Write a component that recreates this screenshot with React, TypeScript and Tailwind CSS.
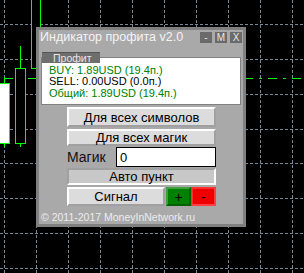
import React from "react";

const VX = [4, 36, 68, 100, 132, 164, 196, 228, 260, 292];
const HY = [24, 59, 94, 129, 163, 198, 233, 268];

function Chart() {
  return (
    <svg className="absolute left-0 top-0" width={304} height={273} viewBox="0 0 304 273">
      {VX.map((x) => (
        <line key={"v" + x} x1={x + 0.5} y1={0} x2={x + 0.5} y2={273} stroke="#778899" strokeWidth={1} strokeDasharray="3 2" />
      ))}
      {HY.map((y) => (
        <line key={"h" + y} x1={0} y1={y + 0.5} x2={304} y2={y + 0.5} stroke="#778899" strokeWidth={1} strokeDasharray="3 2" />
      ))}
      <line x1={0} y1={78.5} x2={304} y2={78.5} stroke="#00ff00" strokeWidth={1} strokeDasharray="9 6 3 6" strokeDashoffset={-4} />
      <line x1={4.5} y1={77} x2={4.5} y2={147} stroke="#00ff00" />
      <rect x={-1.5} y={83.5} width={11} height={60} fill="#ffffff" stroke="#00ff00" />
      <line x1={20.5} y1={46} x2={20.5} y2={147} stroke="#00ff00" />
      <rect x={15.5} y={68.5} width={10} height={75} fill="#000000" stroke="#00ff00" />
      <rect x={31.5} y={-5} width={9} height={73.5} fill="#000000" stroke="#00ff00" />
    </svg>
  );
}

function Btn({ children, className }: { children: React.ReactNode; className: string }) {
  return (
    <div
      className={
        "flex items-center justify-center bg-[#dcdcdc] border-2 border-t-white border-l-white border-r-[#a0a0a0] border-b-[#a0a0a0] text-[13px] text-black leading-none " +
        className
      }
    >
      {children}
    </div>
  );
}

export default function App() {
  return (
    <div className="relative w-[304px] h-[273px] overflow-hidden bg-black font-['Liberation_Sans',Arial,sans-serif]">
      <Chart />
      <div className="absolute left-[36px] top-[27px] w-[210px] h-[200px] border-[3px] border-[#808080] bg-[#a9a9a9] flex flex-col">
        <div className="flex items-start h-[22px] shrink-0">
          <div className="pl-[1px] text-[12.5px] leading-[14px] text-[#f4f4f4] whitespace-nowrap">Индикатор профита v2.0</div>
          <div className="ml-auto mt-[2px] mr-[1px] flex gap-[3px]">
            <div className="w-[12px] h-[11px] bg-[#6a6a6a] text-[#e8e8e8] text-[10px] leading-[11px] text-center">-</div>
            <div className="w-[12px] h-[11px] bg-[#6a6a6a] text-[#e8e8e8] text-[10px] leading-[11px] text-center">M</div>
            <div className="w-[12px] h-[11px] bg-[#6a6a6a] text-[#e8e8e8] text-[10px] leading-[11px] text-center">X</div>
          </div>
        </div>
        <div className="relative ml-[2px] w-[200px] pt-[5px] shrink-0">
          <div className="h-[48px] bg-white border border-[#808080] pl-[7px] pt-[7px] text-[11px] leading-[11.3px] whitespace-nowrap">
            <div className="text-[#008000]">BUY: 1.89USD (19.4п.)</div>
            <div className="text-black">SELL: 0.00USD (0.0п.)</div>
            <div className="text-[#008000]">Общий: 1.89USD (19.4п.)</div>
          </div>
          <div className="absolute left-[1px] top-0 w-[58px] h-[11px] bg-[#6e6e6e] border-t border-[#555555] pl-[11px] text-[10.5px] leading-[10px] text-[#e6e6e6]">
            Профит
          </div>
        </div>
        <div className="ml-[28px] w-[149px] flex flex-col shrink-0">
          <Btn className="mt-[2px] h-[20px]">Для всех символов</Btn>
          <Btn className="mt-[2px] h-[17px]">Для всех магик</Btn>
          <div className="mt-[1px] h-[20px] flex items-center">
            <div className="w-[38px] text-[14px] leading-none text-[#111111]">Магик</div>
            <div className="ml-[11px] w-[100px] h-[20px] bg-white border border-black pl-[3px] flex items-center text-[13px] leading-none text-black">0</div>
          </div>
          <div className="mt-[1px] h-[17px] flex items-center justify-center bg-[#c8c8c8] border-2 border-t-[#a0a0a0] border-l-[#a0a0a0] border-r-white border-b-white text-[13px] leading-none text-black">
            Авто пункт
          </div>
          <div className="mt-[2px] h-[19px] flex">
            <Btn className="w-[98px] h-[19px]">Сигнал</Btn>
            <div className="ml-[1px] w-[25px] h-[19px] flex items-center justify-center bg-[#008000] border-2 border-t-[#40a040] border-l-[#40a040] border-r-[#006000] border-b-[#006000] text-[14px] leading-none text-black">+</div>
            <div className="w-[25px] h-[19px] flex items-center justify-center bg-[#ee0000] border-2 border-t-[#ff3030] border-l-[#ff3030] border-r-[#ff4040] border-b-[#ff4040] text-[13px] leading-none text-black">-</div>
          </div>
        </div>
        <div className="mt-[5px] pl-[2px] text-[10.5px] leading-[12px] text-[#ececec] whitespace-nowrap">© 2011-2017 MoneyInNetwork.ru</div>
      </div>
    </div>
  );
}
